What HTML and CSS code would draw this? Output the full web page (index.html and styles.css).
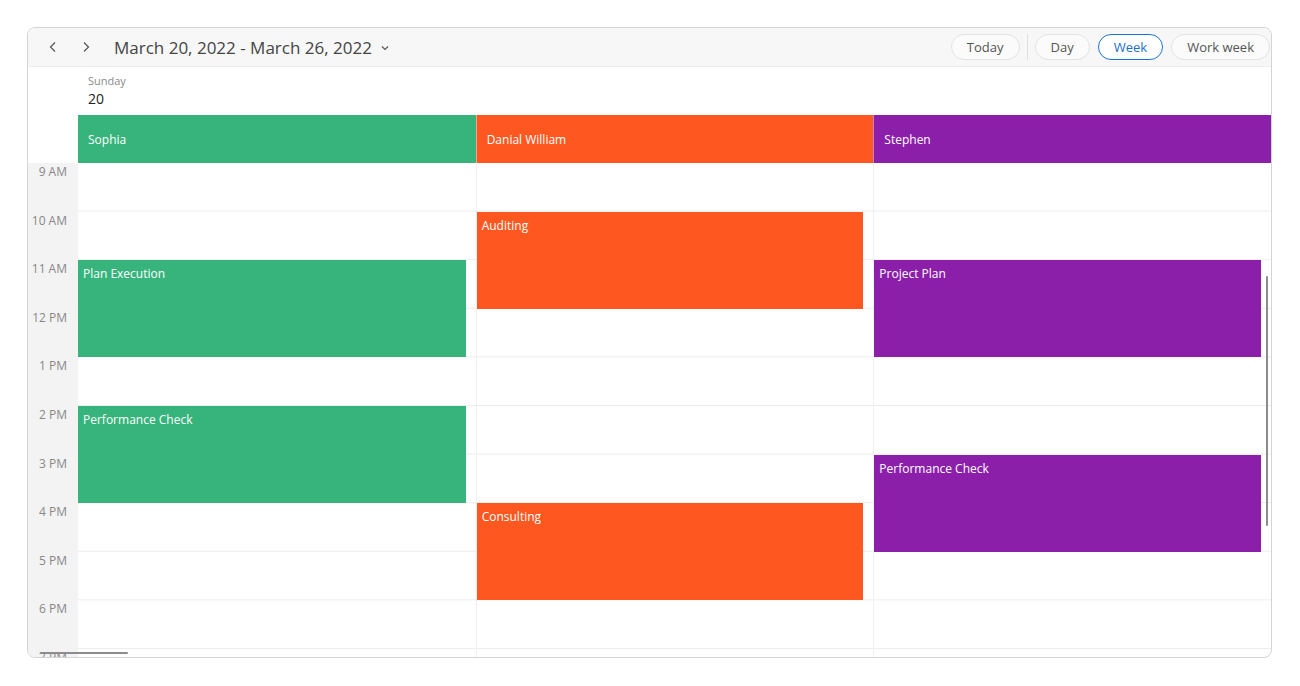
FILE: index.html
```html
<!DOCTYPE html>
<html lang="en">
<head>
    <meta charset="UTF-8">
    <title>Resource Scheduler</title>
    <link rel="stylesheet" href="styles.css">
</head>
<body>
    <div class="scheduler">
        <div class="toolbar">
            <div class="nav">
                <button class="nav-btn" aria-label="Previous">
                    <svg width="12" height="12" viewBox="0 0 12 12"><path d="M8 1.5 3.5 6 8 10.5" fill="none" stroke="#555" stroke-width="1.2"/></svg>
                </button>
                <button class="nav-btn" aria-label="Next">
                    <svg width="12" height="12" viewBox="0 0 12 12"><path d="M4 1.5 8.5 6 4 10.5" fill="none" stroke="#555" stroke-width="1.2"/></svg>
                </button>
                <div class="range">March 20, 2022 - March 26, 2022</div>
                <svg class="drop" width="10" height="10" viewBox="0 0 10 10"><path d="M2 3.5 5 6.5 8 3.5" fill="none" stroke="#555" stroke-width="1.1"/></svg>
            </div>
            <div class="views">
                <button class="pill">Today</button>
                <span class="sep"></span>
                <button class="pill">Day</button>
                <button class="pill active">Week</button>
                <button class="pill">Work week</button>
            </div>
        </div>

        <div class="day-header">
            <div class="corner"></div>
            <div class="day">
                <div class="day-name">Sunday</div>
                <div class="day-num">20</div>
            </div>
        </div>

        <div class="resources">
            <div class="corner"></div>
            <div class="resource green">Sophia</div>
            <div class="resource orange">Danial William</div>
            <div class="resource purple">Stephen</div>
        </div>

        <div class="body">
            <div class="times">
                <div class="time">9 AM</div>
                <div class="time">10 AM</div>
                <div class="time">11 AM</div>
                <div class="time">12 PM</div>
                <div class="time">1 PM</div>
                <div class="time">2 PM</div>
                <div class="time">3 PM</div>
                <div class="time">4 PM</div>
                <div class="time">5 PM</div>
                <div class="time">6 PM</div>
                <div class="time">7 PM</div>
            </div>

            <!-- events are placed by start hour / duration on the time canvas -->
            <div class="column">
                <div class="event green" style="top: calc(var(--hour) * 2); height: calc(var(--hour) * 2);">Plan Execution</div>
                <div class="event green" style="top: calc(var(--hour) * 5); height: calc(var(--hour) * 2);">Performance Check</div>
            </div>
            <div class="column">
                <div class="event orange" style="top: calc(var(--hour) * 1); height: calc(var(--hour) * 2);">Auditing</div>
                <div class="event orange" style="top: calc(var(--hour) * 7); height: calc(var(--hour) * 2);">Consulting</div>
            </div>
            <div class="column">
                <div class="event purple" style="top: calc(var(--hour) * 2); height: calc(var(--hour) * 2);">Project Plan</div>
                <div class="event purple" style="top: calc(var(--hour) * 6); height: calc(var(--hour) * 2);">Performance Check</div>
            </div>

            <div class="vscroll"></div>
            <div class="hscroll"></div>
        </div>
    </div>
</body>
</html>
```

FILE: styles.css
```css
body {
    margin: 0;
    padding: 27px;
    background: #fff;
    font-family: 'Segoe UI', 'Open Sans', 'Noto Sans', sans-serif;
    color: #333;
}
.scheduler {
    --hour: 48.6px;
    width: 1243px;
    height: 629px;
    border: 1px solid #d4d4d4;
    border-radius: 8px;
    overflow: hidden;
    display: flex;
    flex-direction: column;
}
.toolbar {
    height: 38px;
    flex: none;
    background: #f7f7f7;
    display: flex;
    align-items: center;
    justify-content: space-between;
    padding: 0 1px 0 15px;
}
.nav {
    display: flex;
    align-items: center;
}
.nav-btn {
    border: none;
    background: none;
    padding: 0;
    width: 20px;
    height: 20px;
    margin-right: 13px;
    display: flex;
    align-items: center;
    justify-content: center;
}
.range {
    font-size: 17px;
    color: #444;
    margin-left: 5px;
}
.drop {
    margin-left: 8px;
    margin-top: 1px;
}
.views {
    display: flex;
    align-items: center;
    gap: 8px;
}
.pill {
    height: 26px;
    padding: 0 15px;
    border: 1px solid #e2e2e2;
    border-radius: 13px;
    background: #fbfbfb;
    font-family: inherit;
    font-size: 13px;
    color: #555;
}
.pill.active {
    border: 1.5px solid #1a73d6;
    color: #1a6fd0;
    background: #fff;
    padding: 0 15px;
}
.sep {
    width: 1px;
    height: 26px;
    background: #e0e0e0;
    margin: 0 -1px;
}
.day-header {
    height: 48px;
    flex: none;
    display: grid;
    grid-template-columns: 50px 1fr;
    border-top: 1px solid #ededed;
}
.day {
    padding: 7px 10px;
}
.day-name {
    font-size: 11px;
    color: #8a8a8a;
    line-height: 14px;
}
.day-num {
    font-size: 14px;
    color: #222;
    line-height: 18px;
    margin-top: 2px;
}
.resources {
    height: 48px;
    flex: none;
    display: grid;
    grid-template-columns: 50px repeat(3, 1fr);
}
.resource {
    color: #fff;
    font-size: 12px;
    display: flex;
    align-items: center;
    padding-left: 10px;
}
.resource + .resource {
    border-left: 1px solid rgba(255, 255, 255, 0.45);
}
.green { background: #36b47b; }
.orange { background: #fe5820; }
.purple { background: #8b1fa9; }

.body {
    flex: 1;
    min-height: 0;
    position: relative;
    overflow: hidden;
    display: grid;
    grid-template-columns: 50px repeat(3, 1fr);
}
.times {
    background: #f3f3f3;
}
.time {
    height: var(--hour);
    box-sizing: border-box;
    font-size: 12px;
    color: #888;
    text-align: right;
    padding: 0 11px 0 0;
}
.column {
    position: relative;
    background-image: linear-gradient(#ececec 1px, transparent 1px);
    background-size: 100% var(--hour);
    background-position: 0 -1px;
}
.column + .column {
    border-left: 1px solid #f0f0f0;
}
.event {
    position: absolute;
    left: 0;
    right: 10px;
    box-sizing: border-box;
    padding: 6px 5px;
    color: #fff;
    font-size: 12px;
    line-height: 16px;
}
.vscroll {
    position: absolute;
    right: 3px;
    top: 113px;
    width: 2px;
    height: 250px;
    background: #8c8c8c;
    border-radius: 1px;
}
.hscroll {
    position: absolute;
    left: 12px;
    bottom: 3px;
    width: 88px;
    height: 2px;
    background: #8c8c8c;
    border-radius: 1px;
}
```
